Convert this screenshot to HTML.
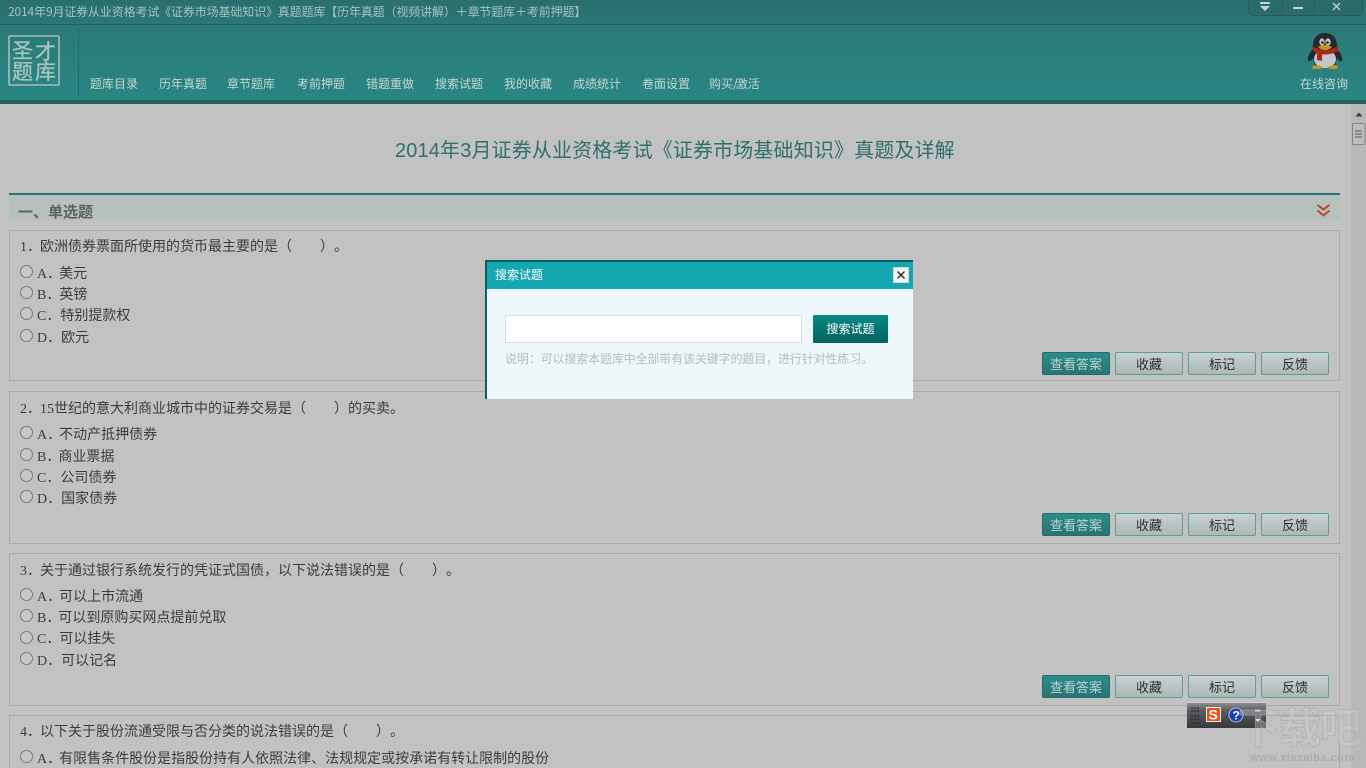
<!DOCTYPE html>
<html><head><meta charset="utf-8">
<style>
html,body{margin:0;padding:0;width:1366px;height:768px;overflow:hidden;background:#c2c2c2}
body{font-family:"Liberation Serif","SimSun","WenQuanYi Zen Hei","Noto Sans CJK SC",sans-serif;font-size:14px;color:#3a3a3a;position:relative}
.a{position:absolute;white-space:nowrap}
.z{font-family:"WenQuanYi Zen Hei","Noto Sans CJK SC",sans-serif}
#top{left:0;top:0;width:1366px;height:101px;background:linear-gradient(#2a6e6e,#2c7a78 30%,#288683)}
#ttl{left:8px;top:4px;font-size:12px;line-height:16px;color:#a3c4c0;letter-spacing:-.14px}
.nav{top:76px;font-size:12px;line-height:16px;color:#c5d6d3}
.box{position:absolute;left:9px;width:1329px;border:1px solid #a9a9a9}
.q{left:20px;color:#3c3c3c;line-height:18px}
.o{left:37px;color:#3c3c3c;line-height:18px}
.r{position:absolute;left:20px;width:11px;height:11px;border:1px solid #7a7a7a;border-radius:50%;background:#c8c8c8}
.b{position:absolute;width:66px;height:21px;border:1px solid #5f9c9c;border-radius:2px;background:linear-gradient(#c8d2d0,#abb9b7);font-size:13px;line-height:22px;text-align:center;color:#2e2e2e;font-family:"WenQuanYi Zen Hei","Noto Sans CJK SC",sans-serif}
.b.m{background:linear-gradient(#2a8d8a,#2a7472);border-color:#266c6a;color:#bcd3d0}
.p{letter-spacing:7px}
.la{margin-left:-2px}.lb{margin-left:-1px}
</style></head><body>
<div class="a" id="top"></div>
<div class="a" style="left:0;top:24px;width:1366px;height:1px;background:#235f5e"></div>
<div class="a" style="left:0;top:100px;width:1366px;height:4px;background:#22615f"></div>
<div class="a z" id="ttl">2014年9月证券从业资格考试《证券市场基础知识》真题题库【历年真题（视频讲解）＋章节题库＋考前押题】</div>

<div class="a" style="left:1248px;top:0;width:113px;height:15px;background:#2b6b6a;border:1px solid #235c5b;border-top:0;border-radius:0 0 5px 5px"></div>
<svg class="a" style="left:1248px;top:0" width="113" height="16">
<path d="M34 0V15M66 0V15" stroke="#235c5b"/>
<path d="M12 2h10v2h-10zM12 6h10l-5 5z" fill="#c5d2d0"/>
<path d="M45 7h10v2h-10z" fill="#c5d2d0"/>
<path d="M85 3l7 7M92 3l-7 7" stroke="#c5d2d0" stroke-width="1.300"/>
</svg>

<svg class="a" style="left:8px;top:35px" width="52" height="51">
<rect x="1" y="1" width="50" height="49" rx="1" fill="none" stroke="#a8bcb9" stroke-width="1.600"/>
<g font-size="21" fill="#a8c4c0" stroke="#a8c4c0" stroke-width=".3" font-family="WenQuanYi Zen Hei,Noto Sans CJK SC,sans-serif">
<text x="4" y="23">圣</text>
<text x="27" y="24">才</text>
<text x="4" y="44">题</text>
<text x="27" y="44">库</text>
</g>
</svg>
<div class="a" style="left:78px;top:28px;width:1px;height:68px;background:#256a68"></div>

<div class="a z nav" style="left:90px">题库目录</div>
<div class="a z nav" style="left:159px">历年真题</div>
<div class="a z nav" style="left:227px">章节题库</div>
<div class="a z nav" style="left:297px">考前押题</div>
<div class="a z nav" style="left:366px">错题重做</div>
<div class="a z nav" style="left:435px">搜索试题</div>
<div class="a z nav" style="left:504px">我的收藏</div>
<div class="a z nav" style="left:573px">成绩统计</div>
<div class="a z nav" style="left:642px">卷面设置</div>
<div class="a z nav" style="left:709px">购买<span style="letter-spacing:-2px">/</span>激活</div>
<div class="a z nav" style="left:1300px">在线咨询</div>

<svg class="a" style="left:1307px;top:32px" width="36" height="38" viewBox="0 0 36 38">
<path d="M1 29C0 25 3 20 6 17C5 7 10 1 18 1C26 1 31 7 30 17C33 20 36 25 35 29C33 30 31 28 30 26L28 34H8L6 26C5 28 3 30 1 29Z" fill="#26282f"/>
<ellipse cx="18" cy="27" rx="11" ry="9" fill="#c4c6c8"/>
<ellipse cx="15" cy="10" rx="2.700" ry="3.600" fill="#c4c4c4"/><ellipse cx="21" cy="10" rx="2.700" ry="3.600" fill="#c4c4c4"/>
<circle cx="15.500" cy="10.500" r="1.300" fill="#222"/><circle cx="20.500" cy="10.500" r="1.300" fill="#222"/>
<path d="M5 14Q18 22 31 14L31 19Q24 23 15 22.500L15 29L10 28L10 21Q5 19 5 14Z" fill="#a9261d"/>
<path d="M11 15Q18 11 25 15Q22 18 18 18Q14 18 11 15Z" fill="#c8951b"/>
<path d="M5 35Q9 31 15 35Q15 37 11 37L6 37ZM31 35Q27 31 21 35Q21 37 25 37L30 37Z" fill="#c8951b"/>
</svg>

<div class="a" style="left:1351px;top:104px;width:15px;height:664px;background:#b8b8b8"></div>
<svg class="a" style="left:1351px;top:104px" width="15" height="42">
<path d="M4.500 12.500l3.500-4 3.500 4z" fill="#3d3d3d"/>
<rect x="1.500" y="19.500" width="12.500" height="21" rx="1" fill="#bdbdbd" stroke="#868686"/>
<path d="M4 27h7M4 30h7M4 33h7" stroke="#5c5c5c"/>
</svg>

<div class="a z" style="left:395px;top:138px;font-size:20px;line-height:26px;letter-spacing:.14px;color:#2f6f6e;font-family:'Liberation Sans','WenQuanYi Zen Hei','Noto Sans CJK SC',sans-serif">2014年3月证券从业资格考试《证券市场基础知识》真题及详解</div>

<div class="a" style="left:9px;top:193px;width:1331px;height:2px;background:#2b7472"></div>
<div class="a" style="left:9px;top:195px;width:1331px;height:25px;background:#b6c1be"></div>
<div class="a z" style="left:18px;top:203px;font-size:15px;line-height:18px;font-weight:bold;color:#5b6361">一、单选题</div>
<svg class="a" style="left:1316px;top:204px" width="15" height="14"><path d="M1.500 1l6 4.500 6-4.500M1.500 6.500l6 5 6-5" fill="none" stroke="#b3492a" stroke-width="2"/></svg>

<div class="box" style="top:230px;height:149px"></div>
<div class="a q" style="top:237px"><span style="margin-right:-1px">1．</span><span class="z">欧洲债券票面所使用的货币最主要的是（　　<span class="p">）</span>。</span></div>
<div class="r" style="top:265px"></div><div class="a o" style="top:264px">A．<span class="z la">美元</span></div>
<div class="r" style="top:286px"></div><div class="a o" style="top:285px">B．<span class="z lb">英镑</span></div>
<div class="r" style="top:307px"></div><div class="a o" style="top:306px">C．<span class="z">特别提款权</span></div>
<div class="r" style="top:329px"></div><div class="a o" style="top:328px">D．<span class="z">欧元</span></div>
<div class="b m" style="left:1042px;top:352px">查看答案</div><div class="b" style="left:1115px;top:352px">收藏</div><div class="b" style="left:1188px;top:352px">标记</div><div class="b" style="left:1261px;top:352px">反馈</div>

<div class="box" style="top:391px;height:151px"></div>
<div class="a q" style="top:399px"><span style="margin-right:-1px">2．</span>15<span class="z">世纪的意大利商业城市中的证券交易是（　　）的买卖。</span></div>
<div class="r" style="top:426px"></div><div class="a o" style="top:425px">A．<span class="z la">不动产抵押债券</span></div>
<div class="r" style="top:448px"></div><div class="a o" style="top:447px">B．<span class="z la">商业票据</span></div>
<div class="r" style="top:469px"></div><div class="a o" style="top:468px">C．<span class="z">公司债券</span></div>
<div class="r" style="top:490px"></div><div class="a o" style="top:489px">D．<span class="z">国家债券</span></div>
<div class="b m" style="left:1042px;top:513px">查看答案</div><div class="b" style="left:1115px;top:513px">收藏</div><div class="b" style="left:1188px;top:513px">标记</div><div class="b" style="left:1261px;top:513px">反馈</div>

<div class="box" style="top:553px;height:151px"></div>
<div class="a q" style="top:561px"><span style="margin-right:-1px">3．</span><span class="z">关于通过银行系统发行的凭证式国债，以下说法错误的是（　　<span class="p">）</span>。</span></div>
<div class="r" style="top:588px"></div><div class="a o" style="top:587px">A．<span class="z la">可以上市流通</span></div>
<div class="r" style="top:609px"></div><div class="a o" style="top:608px">B．<span class="z la">可以到原购买网点提前兑取</span></div>
<div class="r" style="top:631px"></div><div class="a o" style="top:629px">C．<span class="z lb">可以挂失</span></div>
<div class="r" style="top:652px"></div><div class="a o" style="top:651px">D．<span class="z">可以记名</span></div>
<div class="b m" style="left:1042px;top:675px">查看答案</div><div class="b" style="left:1115px;top:675px">收藏</div><div class="b" style="left:1188px;top:675px">标记</div><div class="b" style="left:1261px;top:675px">反馈</div>

<div class="box" style="top:715px;height:70px"></div>
<div class="a q" style="top:722px"><span style="margin-right:-1px">4．</span><span class="z">以下关于股份流通受限与否分类的说法错误的是（　　<span class="p">）</span>。</span></div>
<div class="r" style="top:750px"></div><div class="a o" style="top:749px">A．<span class="z la">有限售条件股份是指股份持有人依照法律、法规规定或按承诺有转让限制的股份</span></div>

<!-- dialog -->
<div class="a" style="left:485px;top:260px;width:428px;height:139px;background:#eef7f9"></div>
<div class="a" style="left:485px;top:260px;width:2px;height:139px;background:#05615f"></div>
<div class="a" style="left:485px;top:260px;width:428px;height:2px;background:#05615f"></div>
<div class="a" style="left:487px;top:262px;width:426px;height:27px;background:#14a7b1"></div>
<div class="a z" style="left:495px;top:267px;font-size:12px;line-height:16px;color:#fff">搜索试题</div>
<div class="a" style="left:893px;top:267px;width:14px;height:14px;background:#f4f4f4;border:1px solid #cfd8da"></div>
<svg class="a" style="left:893px;top:267px" width="16" height="16"><path d="M4.500 4.500l7 7M11.500 4.500l-7 7" stroke="#222" stroke-width="1.300"/></svg>
<div class="a" style="left:505px;top:315px;width:295px;height:26px;background:#fff;border:1px solid #d2dfe4"></div>
<div class="a z" style="left:813px;top:315px;width:75px;height:28px;background:linear-gradient(#058a86,#05625f);color:#fff;font-size:12px;line-height:28px;text-align:center;border-radius:1px">搜索试题</div>
<div class="a z" style="left:505px;top:351px;font-size:12px;line-height:16px;letter-spacing:-.13px;color:#b3bcbe">说明：可以搜索本题库中全部带有该关键字的题目，进行针对性练习。</div>

<!-- ime bar -->
<div class="a" style="left:1187px;top:703px;width:79px;height:25px;background:linear-gradient(#8b8d90 0,#5a5c60 30%,#37393d)"></div>
<div class="a" style="left:1187px;top:702px;width:79px;height:1px;background:#cfcfcf"></div>
<svg class="a" style="left:1187px;top:703px" width="79" height="25">
<path d="M4 5h8M4 8h8M4 13h8M4 16h8M4 20h8" stroke="#1d1d1d" stroke-dasharray="2 1"/>
<rect x="19.500" y="4.500" width="14" height="14" fill="#e8521a" stroke="#eee"/>
<text x="21.500" y="16.500" font-size="14" font-weight="bold" fill="#fff" font-family="Liberation Sans,sans-serif">S</text>
<circle cx="49" cy="12" r="7" fill="#1c3fb8" stroke="#bbb"/>
<text x="45.500" y="16.500" font-size="12" font-weight="bold" fill="#fff" font-family="Liberation Sans,sans-serif">?</text>
<path d="M68 6.500h5.500v2H68z" fill="#eee"/><path d="M68 16h5.500l-2.750 3z" fill="#eee"/>
</svg>

<!-- watermark -->
<div class="a z" style="left:1238px;top:701px;font-size:42px;line-height:50px;letter-spacing:-1px;color:rgba(205,205,205,.35);-webkit-text-stroke:1px rgba(170,170,170,.6);font-weight:bold">下载吧</div>
<div class="a" style="left:1250px;top:751px;font:bold 11px/14px 'Liberation Sans',sans-serif;letter-spacing:.5px;color:rgba(165,165,165,.75)">www.xiazaiba.com</div>
</body></html>
